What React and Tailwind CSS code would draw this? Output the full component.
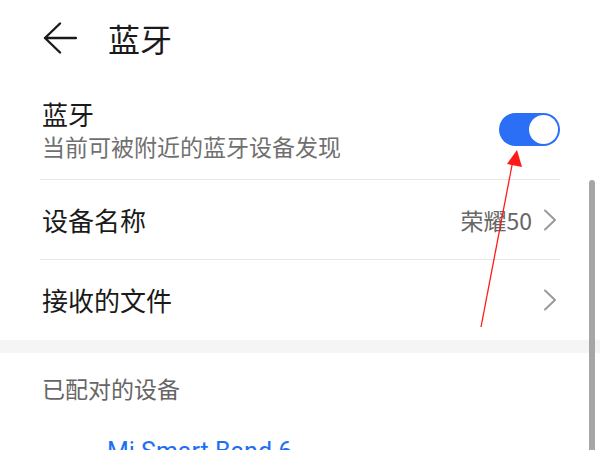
import React from 'react';

const cjk = { fontFamily: '"Noto Sans CJK SC", "Noto Sans", sans-serif' };

const Chevron = () => (
  <svg width="14" height="22" viewBox="0 0 14 22" fill="none" className="shrink-0">
    <path d="M2 1.5 L12 11 L2 20.5" stroke="#9a9a9a" strokeWidth="2" strokeLinecap="round" strokeLinejoin="round" />
  </svg>
);

const Toggle = () => (
  <div className="w-[61px] h-[33px] rounded-full bg-[#2a6ff6] flex items-center justify-end pr-[2px] shrink-0">
    <div className="w-[29px] h-[29px] rounded-full bg-white" />
  </div>
);

export default function App() {
  return (
    <div className="relative w-[600px] h-[450px] overflow-hidden bg-white text-[#1a1a1a]" style={cjk}>
      {/* header */}
      <div className="h-[75px] flex items-center pl-[43px]">
        <svg width="34" height="32" viewBox="0 0 34 32" fill="none">
          <path d="M17 1.5 L2 16 L17 30.5 M2 16 H33" stroke="#1a1a1a" strokeWidth="2.4" strokeLinecap="round" strokeLinejoin="round" />
        </svg>
        <h1 className="ml-[31px] text-[32px] leading-[40px] font-normal">蓝牙</h1>
      </div>

      <div className="px-10">
        <div className="flex items-center justify-between pt-[24px] pb-[19px] border-b border-[#e6e6e6]">
          <div className="pl-[2px] flex flex-col gap-[3px]">
            <span className="text-[26px] leading-[30px]">蓝牙</span>
            <span className="text-[23px] leading-[28px] text-[#707070]">当前可被附近的蓝牙设备发现</span>
          </div>
          <Toggle />
        </div>

        <div className="h-[80px] flex items-center justify-between border-b border-[#e6e6e6] pl-[2px] pr-[3px]">
          <span className="text-[26px] leading-[32px]">设备名称</span>
          <div className="flex items-center gap-[11px]">
            <span className="text-[23px] leading-[30px] text-[#666666]">荣耀50</span>
            <Chevron />
          </div>
        </div>

        <div className="h-[80px] flex items-center justify-between pl-[2px] pr-[3px]">
          <span className="text-[26px] leading-[32px]">接收的文件</span>
          <Chevron />
        </div>
      </div>

      <div className="h-[13px] bg-[#f5f5f5]" />

      <div className="h-[70px] flex items-center pl-[42px]">
        <span className="text-[23px] leading-[30px] text-[#666666]">已配对的设备</span>
      </div>

      <div className="pl-[107px] pt-[13px]">
        <span className="text-[25px] leading-[32px] text-[#1f6ff2]" style={{ fontFamily: 'Roboto, "Noto Sans", sans-serif' }}>
          Mi Smart Band 6
        </span>
      </div>

      {/* scrollbar */}
      <div className="absolute left-[589px] top-[180px] w-[6px] h-[290px] rounded-full bg-[#a6a6a6]" />

      {/* annotation arrow */}
      <svg className="absolute inset-0 pointer-events-none" width="600" height="450" viewBox="0 0 600 450">
        <line x1="481" y1="327" x2="513" y2="160" stroke="#ff1a1a" strokeWidth="1.3" />
        <polygon points="517,150 507,164 522,167" fill="#ff1a1a" />
      </svg>
    </div>
  );
}
